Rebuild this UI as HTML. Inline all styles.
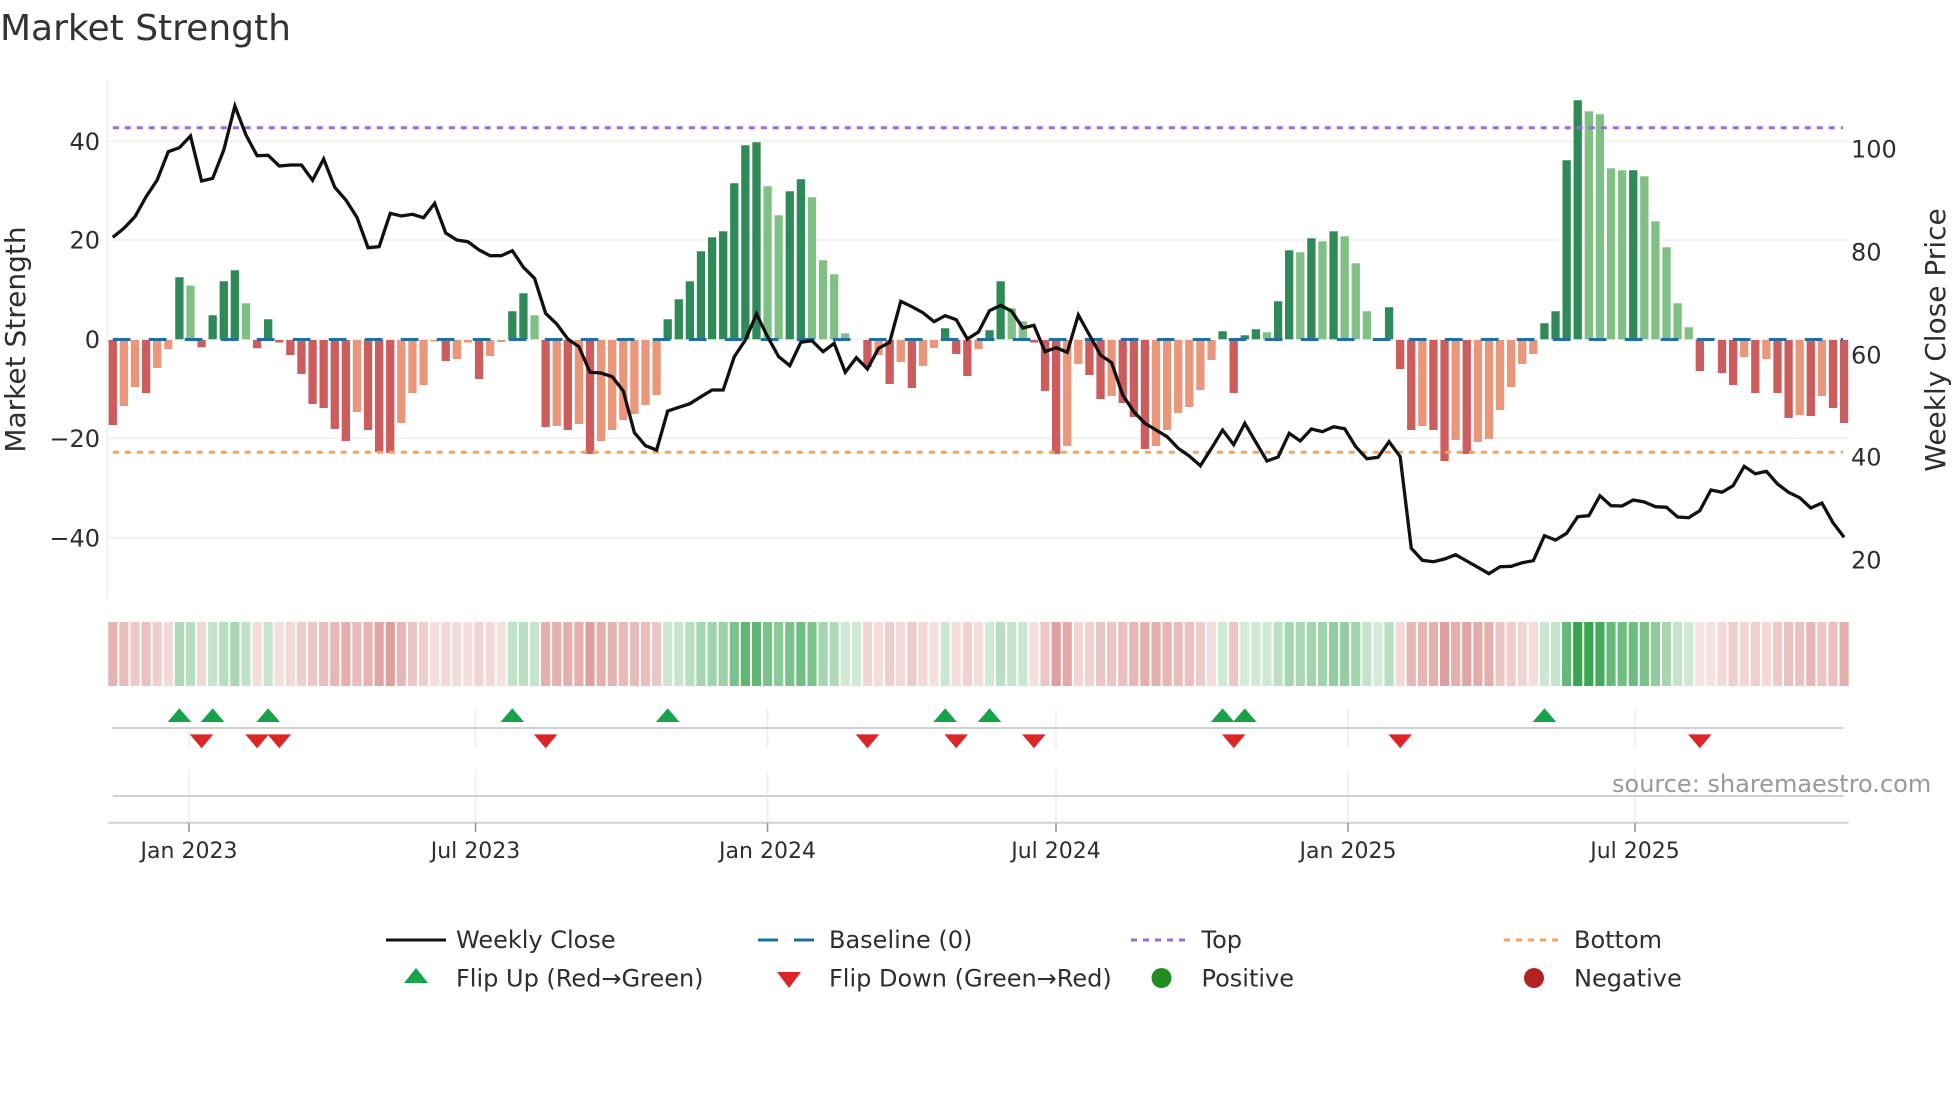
<!DOCTYPE html>
<html lang="en">
<head>
<meta charset="utf-8">
<title>Market Strength</title>
<style>
html,body{margin:0;padding:0;background:#fff;width:1960px;height:1102px;overflow:hidden}
svg{display:block}
text{font-family:"DejaVu Sans","Liberation Sans",sans-serif;fill:#2e2e2e}
.t{font-size:22px}
.y{font-size:24px}
.l{font-size:24px}
.u path,.u polyline{vector-effect:non-scaling-stroke;fill:none}
.tri path{fill:#16a34a}
.trd path{fill:#dc2626}
.r{stroke:#bf443f}
.g{stroke:#2a9e43}
</style>
</head>
<body>
<svg width="1960" height="1102" viewBox="0 0 1960 1102" xmlns="http://www.w3.org/2000/svg">
<rect width="1960" height="1102" fill="#fff"/>
<text x="0" y="40" style="font-size:36px;fill:#333">Market Strength</text>

<!-- grid -->
<g stroke="#eef0f3" stroke-width="1.8" fill="none">
<path d="M107.5 80V599"/>
<path d="M108 141.3H1848M108 240H1848M108 339.5H1848M108 438.3H1848M108 537.7H1848"/>
<path d="M189 709V748M475.5 709V748M767.5 709V748M1056 709V748M1348 709V748M1635 709V748"/>
<path d="M189 770V822M475.5 770V822M767.5 770V822M1056 770V822M1348 770V822M1635 770V822"/>
</g>

<g transform="translate(112.8 0) scale(11.098 1)">
<!-- bars -->
<g class="u" stroke-width="8.3">
<path stroke="#cd5c5c" transform="translate(0 340)" d="M0 0v85M3 0v53M8 0v7.3M13 0v8.3M15 0v2.5M16 0v15M17 0v34M18 0v64M19 0v68M20 0v89M21 0v101M23 0v90M24 0v112M25 0v113M30 0v21M33 0v39M39 0v87M41 0v90M43 0v114M68 0v27M70 0v44M72 0v48M76 0v14M77 0v36M83 0v2.5M84 0v51M85 0v114M88 0v35M89 0v59M91 0v63M92 0v77M93 0v109M101 0v53M116 0v29M117 0v90M119 0v90M120 0v121M122 0v114M143 0v31M145 0v33M146 0v45M148 0v53M150 0v53M151 0v78M153 0v76M155 0v68"/>
<path stroke="#c46060" transform="translate(0 340)" d="M156 0v83"/>
<path stroke="#e9967a" transform="translate(0 340)" d="M1 0v66M2 0v47M4 0v28M5 0v9M22 0v72M26 0v83M27 0v53M28 0v45M29 0v1.5M31 0v19M32 0v2.5M34 0v16M35 0v2M40 0v86M42 0v84M44 0v101M45 0v90M46 0v80M47 0v74M48 0v65M49 0v55M69 0v15M71 0v22M73 0v26M74 0v8M78 0v9M86 0v106M87 0v24M90 0v56M94 0v106M95 0v90M96 0v73M97 0v67M98 0v50M99 0v20M118 0v86M121 0v100M123 0v102M124 0v99M125 0v70M126 0v47M127 0v24M128 0v14M147 0v17M149 0v19M152 0v75M154 0v56"/>
<path stroke="#2e8b57" transform="translate(0 339.3)" d="M6 0v-62M9 0v-24M10 0v-58M11 0v-69M14 0v-20M36 0v-28M37 0v-46M50 0v-20M51 0v-40M52 0v-58M53 0v-88M54 0v-102M55 0v-108M56 0v-156M57 0v-194M58 0v-197M61 0v-148M62 0v-160M75 0v-11M79 0v-9M80 0v-58M100 0v-8M102 0v-4M103 0v-10M105 0v-38M106 0v-89M108 0v-101M110 0v-108M115 0v-32M129 0v-16M130 0v-28M131 0v-179M132 0v-239M137 0v-169"/>
<path stroke="#81c084" transform="translate(0 339.3)" d="M7 0v-53.7M12 0v-36M38 0v-24M59 0v-153M60 0v-124M63 0v-142M64 0v-79M65 0v-65M66 0v-6M81 0v-31M82 0v-18M104 0v-7M107 0v-87M109 0v-98M111 0v-103M112 0v-76M113 0v-28M133 0v-228M134 0v-225M135 0v-171M136 0v-169M138 0v-163M139 0v-118M140 0v-92M141 0v-36M142 0v-12"/>
</g>

<!-- heat strip -->
<g class="u" stroke-width="9.2">
<path class="r" opacity=".4" d="M0 622V686"/><path class="r" opacity=".35" d="M1 622V686"/><path class="r" opacity=".28" d="M2 622V686"/><path class="r" opacity=".32" d="M3 622V686"/><path class="r" opacity=".25" d="M4 622V686"/><path class="r" opacity=".2" d="M5 622V686"/>
<path class="g" opacity=".38" d="M6 622V686"/><path class="g" opacity=".34" d="M7 622V686"/><path class="r" opacity=".2" d="M8 622V686"/><path class="g" opacity=".27" d="M9 622V686"/><path class="g" opacity=".33" d="M10 622V686"/><path class="g" opacity=".4" d="M11 622V686"/><path class="g" opacity=".29" d="M12 622V686"/><path class="r" opacity=".18" d="M13 622V686"/><path class="g" opacity=".26" d="M14 622V686"/><path class="r" opacity=".17" d="M15 622V686"/>
<path class="r" opacity=".2" d="M16 622V686"/><path class="r" opacity=".25" d="M17 622V686"/><path class="r" opacity=".3" d="M18 622V686"/><path class="r" opacity=".33" d="M19 622V686"/><path class="r" opacity=".38" d="M20 622V686"/><path class="r" opacity=".42" d="M21 622V686"/><path class="r" opacity=".35" d="M22 622V686"/><path class="r" opacity=".4" d="M23 622V686"/><path class="r" opacity=".47" d="M24 622V686"/><path class="r" opacity=".5" d="M25 622V686"/><path class="r" opacity=".38" d="M26 622V686"/><path class="r" opacity=".3" d="M27 622V686"/><path class="r" opacity=".26" d="M28 622V686"/><path class="r" opacity=".17" d="M29 622V686"/><path class="r" opacity=".2" d="M30 622V686"/><path class="r" opacity=".19" d="M31 622V686"/><path class="r" opacity=".17" d="M32 622V686"/><path class="r" opacity=".23" d="M33 622V686"/><path class="r" opacity=".2" d="M34 622V686"/><path class="r" opacity=".16" d="M35 622V686"/>
<path class="g" opacity=".29" d="M36 622V686"/><path class="g" opacity=".32" d="M37 622V686"/><path class="g" opacity=".26" d="M38 622V686"/>
<path class="r" opacity=".42" d="M39 622V686"/><path class="r" opacity=".42" d="M40 622V686"/><path class="r" opacity=".42" d="M41 622V686"/><path class="r" opacity=".42" d="M42 622V686"/><path class="r" opacity=".5" d="M43 622V686"/><path class="r" opacity=".42" d="M44 622V686"/><path class="r" opacity=".4" d="M45 622V686"/><path class="r" opacity=".37" d="M46 622V686"/><path class="r" opacity=".36" d="M47 622V686"/><path class="r" opacity=".34" d="M48 622V686"/><path class="r" opacity=".3" d="M49 622V686"/>
<path class="g" opacity=".24" d="M50 622V686"/><path class="g" opacity=".26" d="M51 622V686"/><path class="g" opacity=".32" d="M52 622V686"/><path class="g" opacity=".42" d="M53 622V686"/><path class="g" opacity=".44" d="M54 622V686"/><path class="g" opacity=".47" d="M55 622V686"/><path class="g" opacity=".62" d="M56 622V686"/><path class="g" opacity=".74" d="M57 622V686"/><path class="g" opacity=".74" d="M58 622V686"/><path class="g" opacity=".62" d="M59 622V686"/><path class="g" opacity=".54" d="M60 622V686"/><path class="g" opacity=".62" d="M61 622V686"/><path class="g" opacity=".67" d="M62 622V686"/><path class="g" opacity=".6" d="M63 622V686"/><path class="g" opacity=".42" d="M64 622V686"/><path class="g" opacity=".37" d="M65 622V686"/><path class="g" opacity=".22" d="M66 622V686"/><path class="g" opacity=".22" d="M67 622V686"/>
<path class="r" opacity=".22" d="M68 622V686"/><path class="r" opacity=".18" d="M69 622V686"/><path class="r" opacity=".26" d="M70 622V686"/><path class="r" opacity=".2" d="M71 622V686"/><path class="r" opacity=".27" d="M72 622V686"/><path class="r" opacity=".2" d="M73 622V686"/><path class="r" opacity=".16" d="M74 622V686"/><path class="g" opacity=".24" d="M75 622V686"/><path class="r" opacity=".18" d="M76 622V686"/><path class="r" opacity=".24" d="M77 622V686"/><path class="r" opacity=".17" d="M78 622V686"/><path class="g" opacity=".22" d="M79 622V686"/><path class="g" opacity=".32" d="M80 622V686"/><path class="g" opacity=".27" d="M81 622V686"/><path class="g" opacity=".24" d="M82 622V686"/><path class="r" opacity=".16" d="M83 622V686"/><path class="r" opacity=".3" d="M84 622V686"/><path class="r" opacity=".5" d="M85 622V686"/><path class="r" opacity=".45" d="M86 622V686"/><path class="r" opacity=".22" d="M87 622V686"/><path class="r" opacity=".24" d="M88 622V686"/><path class="r" opacity=".3" d="M89 622V686"/><path class="r" opacity=".3" d="M90 622V686"/><path class="r" opacity=".33" d="M91 622V686"/><path class="r" opacity=".38" d="M92 622V686"/><path class="r" opacity=".42" d="M93 622V686"/><path class="r" opacity=".42" d="M94 622V686"/><path class="r" opacity=".38" d="M95 622V686"/><path class="r" opacity=".35" d="M96 622V686"/><path class="r" opacity=".33" d="M97 622V686"/><path class="r" opacity=".27" d="M98 622V686"/><path class="r" opacity=".18" d="M99 622V686"/><path class="g" opacity=".22" d="M100 622V686"/><path class="r" opacity=".3" d="M101 622V686"/><path class="g" opacity=".2" d="M102 622V686"/><path class="g" opacity=".21" d="M103 622V686"/><path class="g" opacity=".22" d="M104 622V686"/><path class="g" opacity=".3" d="M105 622V686"/><path class="g" opacity=".42" d="M106 622V686"/><path class="g" opacity=".4" d="M107 622V686"/>
<path class="g" opacity=".44" d="M108 622V686"/><path class="g" opacity=".44" d="M109 622V686"/><path class="g" opacity=".5" d="M110 622V686"/><path class="g" opacity=".5" d="M111 622V686"/><path class="g" opacity=".44" d="M112 622V686"/><path class="g" opacity=".27" d="M113 622V686"/><path class="g" opacity=".2" d="M114 622V686"/><path class="g" opacity=".32" d="M115 622V686"/>
<path class="r" opacity=".2" d="M116 622V686"/><path class="r" opacity=".38" d="M117 622V686"/><path class="r" opacity=".38" d="M118 622V686"/><path class="r" opacity=".42" d="M119 622V686"/><path class="r" opacity=".5" d="M120 622V686"/><path class="r" opacity=".42" d="M121 622V686"/><path class="r" opacity=".48" d="M122 622V686"/><path class="r" opacity=".45" d="M123 622V686"/><path class="r" opacity=".42" d="M124 622V686"/><path class="r" opacity=".3" d="M125 622V686"/><path class="r" opacity=".26" d="M126 622V686"/><path class="r" opacity=".22" d="M127 622V686"/><path class="r" opacity=".18" d="M128 622V686"/>
<path class="g" opacity=".24" d="M129 622V686"/><path class="g" opacity=".27" d="M130 622V686"/><path class="g" opacity=".72" d="M131 622V686"/><path class="g" opacity=".92" d="M132 622V686"/><path class="g" opacity=".92" d="M133 622V686"/><path class="g" opacity=".87" d="M134 622V686"/><path class="g" opacity=".7" d="M135 622V686"/><path class="g" opacity=".67" d="M136 622V686"/><path class="g" opacity=".67" d="M137 622V686"/><path class="g" opacity=".62" d="M138 622V686"/><path class="g" opacity=".52" d="M139 622V686"/><path class="g" opacity=".42" d="M140 622V686"/><path class="g" opacity=".27" d="M141 622V686"/><path class="g" opacity=".22" d="M142 622V686"/>
<path class="r" opacity=".15" d="M143 622V686"/><path class="r" opacity=".15" d="M144 622V686"/><path class="r" opacity=".2" d="M145 622V686"/><path class="r" opacity=".25" d="M146 622V686"/><path class="r" opacity=".22" d="M147 622V686"/><path class="r" opacity=".25" d="M148 622V686"/><path class="r" opacity=".2" d="M149 622V686"/><path class="r" opacity=".28" d="M150 622V686"/><path class="r" opacity=".32" d="M151 622V686"/><path class="r" opacity=".32" d="M152 622V686"/><path class="r" opacity=".38" d="M153 622V686"/><path class="r" opacity=".3" d="M154 622V686"/><path class="r" opacity=".33" d="M155 622V686"/><path class="r" opacity=".42" d="M156 622V686"/>
</g>
</g>

<!-- reference lines -->
<path d="M112.8 339.5H1843" stroke="#1f6fa3" stroke-width="3" stroke-dasharray="17.7 18.3" fill="none"/>
<path d="M112.8 127.7H1843" stroke="#9b6bdc" stroke-width="3" stroke-dasharray="6 6" fill="none"/>
<path d="M112.8 452.3H1843" stroke="#f2a35e" stroke-width="3" stroke-dasharray="6 6" fill="none"/>

<!-- price -->
<g class="u" transform="translate(112.8 0) scale(11.098 1)">
<polyline stroke="#111" stroke-width="3.3" stroke-linejoin="miter" stroke-miterlimit="8" points="0,237.3 1,228.3 2,216.7 3,196.7 4,180 5,151.7 6,147.7 7,136 8,181 9,178.3 10,150 11,106 12,135 13,155.7 14,155.3 15,166 16,165 17,165 18,180.3 19,159 20,187.3 21,200 22,217.3 23,247.7 24,246.7 25,213.3 26,216 27,214.3 28,217.7 29,203.3 30,233 31,240 32,241.7 33,250 34,255.7 35,255.7 36,250.7 37,267.3 38,278.3 39,313.3 40,324 41,339 42,346.7 43,372.3 44,373 45,376.7 46,391 47,432.7 48,445.7 49,450 50,411 51,407.3 52,403.7 53,396.7 54,390 55,390 56,356.7 57,340 58,314 59,336.7 60,356.7 61,365.7 62,342.3 63,340.7 64,351.7 65,343.3 66,372.3 67,357.7 68,369 69,348.3 70,342.3 71,301.3 72,306.7 73,312.7 74,321.7 75,315.7 76,319.7 77,339 78,332 79,310.7 80,305.3 81,311.3 82,328 83,325.3 84,351.7 85,347.7 86,352.3 87,315 88,335 89,355 90,362.7 91,395 92,411.7 93,423.3 94,430 95,436.7 96,448.3 97,456 98,465.7 99,448.3 100,430 101,444.7 102,423.3 103,442.3 104,461 105,457 106,433.3 107,441 108,429 109,431.7 110,426.7 111,428.7 112,446.7 113,458.7 114,457.3 115,441.7 116,456.7 117,548.3 118,560.3 119,561.7 120,559 121,554.7 122,561 123,567.3 124,573.7 125,566.7 126,566.3 127,562.7 128,560.7 129,535.7 130,540 131,533.3 132,516.7 133,515.7 134,495.7 135,505.7 136,506 137,500 138,502 139,506.7 140,507.3 141,517 142,517.7 143,510.7 144,490 145,492.3 146,485.7 147,466.3 148,473.7 149,471.3 150,484 151,492.3 152,497.7 153,508 154,503 155,522.7 156,537.3"/>
</g>

<!-- flip panel lines -->
<g stroke="#d0d1d4" stroke-width="2" fill="none">
<path d="M112.8 728H1843.5"/>
<path d="M112.8 796H1843.5"/>
<path d="M108.2 822.7H1848.5"/>
</g>
<path d="M189 823V832M475.5 823V832M767.5 823V832M1056 823V832M1348 823V832M1635 823V832" stroke="#999" stroke-width="1.6" fill="none"/>

<!-- flip markers -->
<g transform="translate(112.8 0) scale(11.098 1)">
<g class="tri">
<path d="M6 708.2l1.063 13.8h-2.126z"/><path d="M9 708.2l1.063 13.8h-2.126z"/><path d="M14 708.2l1.063 13.8h-2.126z"/><path d="M36 708.2l1.063 13.8h-2.126z"/><path d="M50 708.2l1.063 13.8h-2.126z"/><path d="M75 708.2l1.063 13.8h-2.126z"/><path d="M79 708.2l1.063 13.8h-2.126z"/><path d="M100 708.2l1.063 13.8h-2.126z"/><path d="M102 708.2l1.063 13.8h-2.126z"/><path d="M129 708.2l1.063 13.8h-2.126z"/>
</g>
<g class="trd">
<path d="M8 748.2l1.063 -13.8h-2.126z"/><path d="M13 748.2l1.063 -13.8h-2.126z"/><path d="M15 748.2l1.063 -13.8h-2.126z"/><path d="M39 748.2l1.063 -13.8h-2.126z"/><path d="M68 748.2l1.063 -13.8h-2.126z"/><path d="M76 748.2l1.063 -13.8h-2.126z"/><path d="M83 748.2l1.063 -13.8h-2.126z"/><path d="M101 748.2l1.063 -13.8h-2.126z"/><path d="M116 748.2l1.063 -13.8h-2.126z"/><path d="M143 748.2l1.063 -13.8h-2.126z"/>
</g>
</g>

<!-- left ticks -->
<g class="y" text-anchor="end">
<text x="100" y="150">40</text>
<text x="100" y="248.7">20</text>
<text x="100" y="348.2">0</text>
<text x="100" y="447">−20</text>
<text x="100" y="546.4">−40</text>
</g>
<!-- right ticks -->
<g class="y">
<text x="1851" y="157.7">100</text>
<text x="1851" y="260.7">80</text>
<text x="1851" y="363.7">60</text>
<text x="1851" y="465.7">40</text>
<text x="1851" y="568.7">20</text>
</g>
<!-- axis titles -->
<text transform="translate(25 339.5) rotate(-90)" text-anchor="middle" style="font-size:28px">Market Strength</text>
<text transform="translate(1945 340) rotate(-90)" text-anchor="middle" style="font-size:28px">Weekly Close Price</text>

<!-- x ticks -->
<g class="t" text-anchor="middle">
<text x="189" y="858">Jan 2023</text>
<text x="475.5" y="858">Jul 2023</text>
<text x="767.5" y="858">Jan 2024</text>
<text x="1056" y="858">Jul 2024</text>
<text x="1348" y="858">Jan 2025</text>
<text x="1635" y="858">Jul 2025</text>
</g>

<text x="1612" y="792" style="font-size:24px;fill:#999">source: sharemaestro.com</text>

<!-- legend -->
<path d="M386 940H446" stroke="#111" stroke-width="3" fill="none"/>
<path d="M758 940H814" stroke="#1f6fa3" stroke-width="3" stroke-dasharray="20 16" fill="none"/>
<path d="M1131 940H1187" stroke="#9b6bdc" stroke-width="3" stroke-dasharray="6 6" fill="none"/>
<path d="M1504 940H1560" stroke="#f2a35e" stroke-width="3" stroke-dasharray="6 6" fill="none"/>
<path d="M416 968l12 15h-24z" fill="#16a34a"/>
<path d="M789 988l12 -16h-24z" fill="#dc2626"/>
<circle cx="1161.5" cy="978" r="10" fill="#228b22"/>
<circle cx="1534" cy="978" r="10" fill="#b22222"/>
<g class="l">
<text x="456" y="948">Weekly Close</text>
<text x="829" y="948">Baseline (0)</text>
<text x="1201.5" y="948">Top</text>
<text x="1574" y="948">Bottom</text>
<text x="456" y="986.5">Flip Up (Red→Green)</text>
<text x="829" y="986.5">Flip Down (Green→Red)</text>
<text x="1201.5" y="986.5">Positive</text>
<text x="1574" y="986.5">Negative</text>
</g>
</svg>
</body>
</html>
